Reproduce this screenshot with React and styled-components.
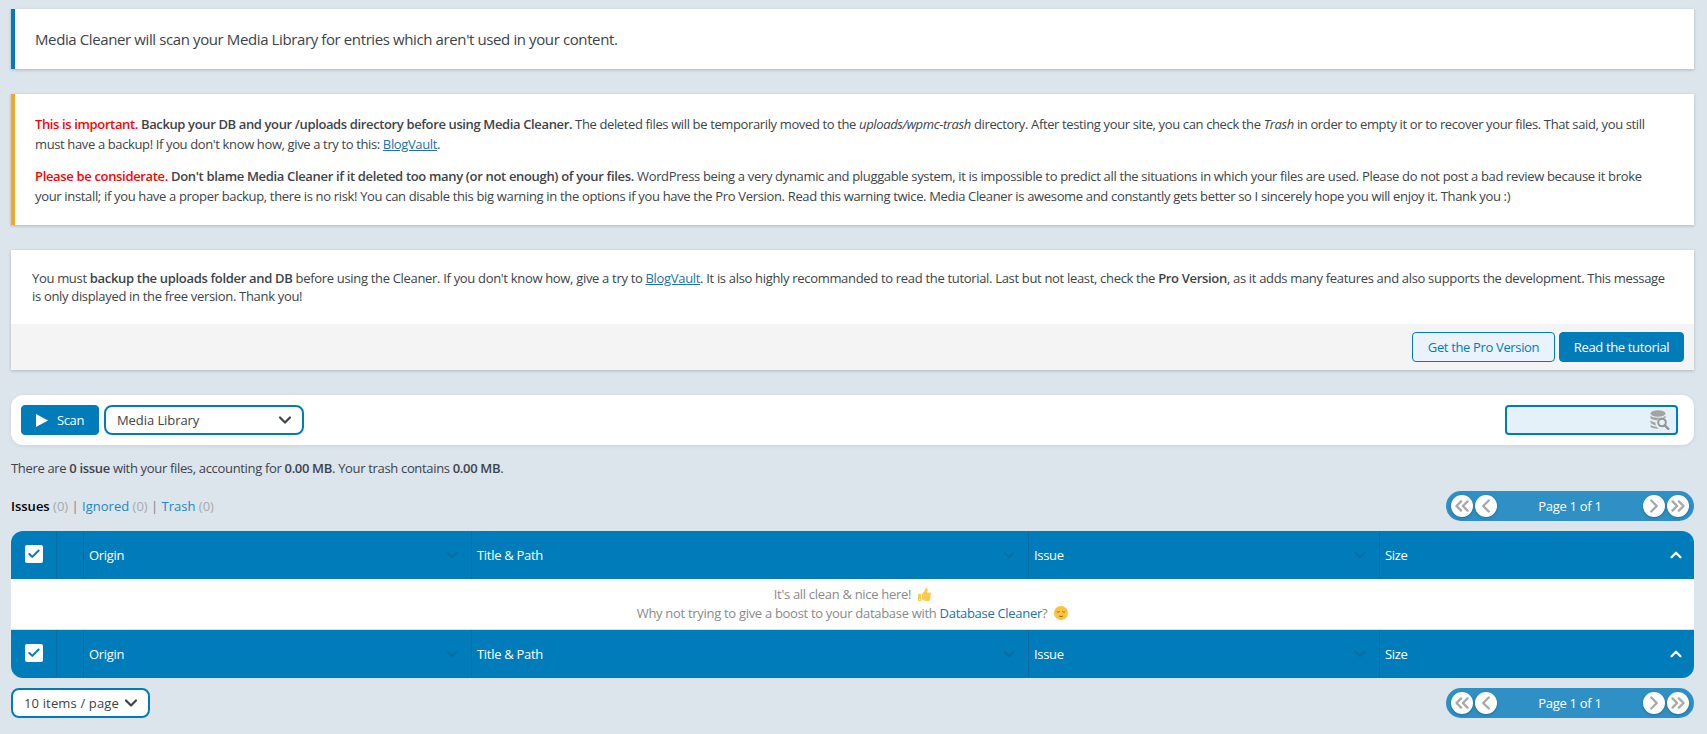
import React from 'react';
import styled, { createGlobalStyle } from 'styled-components';
import { FaThumbsUp } from 'react-icons/fa';
import {
  LuCheck,
  LuChevronDown,
  LuChevronLeft,
  LuChevronRight,
  LuChevronUp,
  LuChevronsLeft,
  LuChevronsRight,
} from 'react-icons/lu';

const GlobalStyle = createGlobalStyle`
  html, body {
    margin: 0;
    padding: 0;
    background: #dce4ec;
    overflow: hidden;
  }
  body {
    font-family: "Open Sans", "Noto Sans", sans-serif;
    font-size: 13px;
    color: #3c434a;
  }
`;

const Page = styled.div`
  box-sizing: border-box;
  width: 1707px;
  height: 734px;
  padding: 9px 13px 0 11px;
`;

const Notice = styled.div`
  background: #fff;
  border-left: 4px solid ${(p) => p.$accent};
  box-shadow: 0 1px 3px rgba(0, 0, 0, 0.2);
  box-sizing: border-box;
  height: ${(p) => p.$height};
  margin-bottom: 25px;
  padding: ${(p) => p.$padding};
`;

const IntroText = styled.div`
  font-size: 15px;
  line-height: 20px;
  letter-spacing: -0.39px;
`;

const WarnText = styled.p`
  margin: 0 0 12px;
  line-height: 20px;
  letter-spacing: ${(p) => p.$tracking};
  &:last-child {
    margin-bottom: 0;
  }
`;

const Red = styled.b`
  color: #f00;
  font-weight: 600;
`;

const Strong = styled.b`
  font-weight: 600;
`;

const TextLink = styled.a`
  color: #2271b1;
  text-decoration: underline;
`;

const PromoCard = styled.div`
  background: #fff;
  box-shadow: 0 1px 3px rgba(0, 0, 0, 0.2);
  margin-bottom: 25px;
`;

const PromoBody = styled.div`
  box-sizing: border-box;
  height: 74px;
  padding: 20px 26px 0 21px;
  font-size: 13px;
  line-height: 17.5px;
  letter-spacing: -0.32px;
`;

const PromoFooter = styled.div`
  display: flex;
  justify-content: flex-end;
  gap: 4px;
  box-sizing: border-box;
  height: 46px;
  padding: 8px 10px 0 0;
  background: #f4f4f4;
`;

const Button = styled.button`
  box-sizing: border-box;
  display: inline-flex;
  align-items: center;
  justify-content: center;
  gap: 9px;
  width: ${(p) => p.$width};
  height: 30px;
  padding: 0;
  border: 1px solid #007cba;
  border-radius: 4px;
  background: ${(p) => (p.$outline ? '#eaf3fb' : '#007cba')};
  color: ${(p) => (p.$outline ? '#007cba' : '#fff')};
  font-family: inherit;
  font-size: 13px;
  letter-spacing: -0.35px;
`;

const Toolbar = styled.div`
  display: flex;
  align-items: center;
  gap: 5px;
  box-sizing: border-box;
  height: 50px;
  padding: 0 16px 0 10px;
  background: #fff;
  border-radius: 12px;
  box-shadow: 0 1px 4px rgba(0, 0, 0, 0.08);
`;

const Select = styled.div`
  box-sizing: border-box;
  display: flex;
  align-items: center;
  justify-content: space-between;
  width: ${(p) => p.$width};
  height: 30px;
  padding: 0 7px 0 11px;
  background: #fff;
  border: 2px solid #007cba;
  border-radius: 8px;
  font-size: 13px;
  letter-spacing: ${(p) => p.$tracking};
  svg {
    font-size: 20px;
    stroke-width: 2.6;
    color: #3c434a;
  }
`;

const SearchBox = styled.div`
  box-sizing: border-box;
  display: flex;
  align-items: center;
  justify-content: flex-end;
  width: 173px;
  height: 30px;
  margin-left: auto;
  padding-right: 6px;
  background: #e5f1f8;
  border: 2px solid #007cba;
  border-radius: 4px;
`;

const Summary = styled.div`
  margin-top: 13px;
  line-height: 20px;
  letter-spacing: -0.33px;
`;

const TabsRow = styled.div`
  display: flex;
  align-items: center;
  justify-content: space-between;
  height: 30px;
  margin: 13px 0 10px;
`;

const Tabs = styled.div`
  color: #a7aaad;
`;

const TabActive = styled.b`
  color: #000;
  font-weight: 600;
`;

const TabLink = styled.a`
  color: #2288c4;
`;

const TabSep = styled.span`
  color: #7d8287;
`;

const Pager = styled.div`
  box-sizing: border-box;
  display: flex;
  align-items: center;
  gap: 2px;
  width: 248px;
  height: 30px;
  padding: 0 5px;
  background: #2f90c5;
  border-radius: 15px;
`;

const PagerButton = styled.span`
  display: flex;
  align-items: center;
  justify-content: center;
  width: 22px;
  height: 22px;
  border-radius: 50%;
  background: #fff;
  color: #a9a9a9;
  font-size: 22px;
  box-shadow: 0 1px 3px rgba(0, 0, 0, 0.25);
  svg {
    flex-shrink: 0;
    stroke-width: 2.6;
  }
`;

const PagerLabel = styled.span`
  flex: 1;
  text-align: center;
  color: #fff;
  font-size: 13px;
  letter-spacing: -0.3px;
`;

const HeadRow = styled.div`
  display: grid;
  grid-template-columns: 45px 27px 388px 557px 351px 1fr;
  height: 48px;
  background: #007cba;
  border-radius: ${(p) => (p.$bottom ? '0 0 12px 12px' : '12px 12px 0 0')};
  color: #fff;
`;

const HeadCell = styled.div`
  box-sizing: border-box;
  display: flex;
  align-items: center;
  justify-content: space-between;
  padding: 0 10px 0 5px;
  font-size: 13px;
  letter-spacing: -0.3px;
  & + & {
    border-left: 1px solid #0a6ea3;
  }
  &:first-child {
    padding: 0 0 2px 14px;
  }
`;

const SortIcon = styled.span`
  display: flex;
  font-size: 18px;
  color: ${(p) => (p.$active ? '#fff' : '#0a6ea3')};
  margin-right: ${(p) => (p.$active ? '-1px' : '0')};
  svg {
    stroke-width: ${(p) => (p.$active ? 3 : 2.4)};
  }
`;

const CheckBox = styled.span`
  display: flex;
  align-items: center;
  justify-content: center;
  width: 18px;
  height: 18px;
  border-radius: 2px;
  background: #fff;
  color: #007cba;
  font-size: 14px;
  svg {
    stroke-width: 3.4;
  }
`;

const EmptyRow = styled.div`
  box-sizing: border-box;
  height: 51px;
  padding-top: 6px;
  background: #fff;
  border-bottom: 1px solid #dcdcdc;
  color: #8a8a8a;
  text-align: center;
  font-size: 13px;
  line-height: 19px;
  letter-spacing: -0.3px;
`;

const EmojiSlot = styled.span`
  display: inline-flex;
  vertical-align: -2px;
  margin-left: 4px;
  color: #fbc94c;
  font-size: 13px;
`;

const DbLink = styled.a`
  color: #2271b1;
  text-decoration: none;
`;

const BottomRow = styled.div`
  display: flex;
  align-items: center;
  justify-content: space-between;
  margin-top: 10px;
`;

const DatabaseSearchIcon = () => (
  <svg width="20" height="20" viewBox="0 0 20 20" fill="#a3a3a3">
    <ellipse cx="8" cy="3.500" rx="7.500" ry="3.200" />
    <path d="M.5 5.500C2 8.500 14 8.500 15.500 5.500v2.700a6.500 6.500 0 0 0-8.500 2C3.500 10 1.500 9.300.5 8.200z" />
    <path d="M.5 10.200C1.500 11.500 3.600 12.200 5.500 12.400c-.1 1 .1 2 .5 2.900C3.500 15 1.200 14 .5 12.800z" />
    <path d="M.5 14.800c1 1 3 1.700 6.300 2 .700 1 1.200 1.400 2 1.900-4.500.200-7.600-1-8.300-2z" />
    <circle cx="12" cy="12.500" r="3.800" fill="none" stroke="#969696" strokeWidth="2" />
    <path d="M14.800 15.300l3.500 3.500" stroke="#969696" strokeWidth="2.600" strokeLinecap="round" />
  </svg>
);

const PlayIcon = () => (
  <svg width="12" height="13" viewBox="0 0 12 13" fill="#fff">
    <path d="M0 0l12 6.500L0 13z" />
  </svg>
);

const RelievedFace = () => (
  <svg width="14" height="14" viewBox="0 0 14 14">
    <circle cx="7" cy="7" r="7" fill="#fbc23f" />
    <path d="M2.800 5.500c.800.700 2 .700 2.800 0M8.400 5.500c.800.700 2 .700 2.800 0" stroke="#a0621a" fill="none" strokeWidth="1" />
    <path d="M5 10c1.300.700 2.700.700 4 0" stroke="#a0621a" fill="none" strokeWidth="1" />
  </svg>
);

const TablePager = () => (
  <Pager>
    <PagerButton><LuChevronsLeft /></PagerButton>
    <PagerButton><LuChevronLeft /></PagerButton>
    <PagerLabel>Page 1 of 1</PagerLabel>
    <PagerButton><LuChevronRight /></PagerButton>
    <PagerButton><LuChevronsRight /></PagerButton>
  </Pager>
);

const columns = ['Origin', 'Title & Path', 'Issue'];

const TableHead = ({ bottom }) => (
  <HeadRow $bottom={bottom}>
    <HeadCell><CheckBox><LuCheck /></CheckBox></HeadCell>
    <HeadCell />
    {columns.map((label) => (
      <HeadCell key={label}>
        {label}
        <SortIcon><LuChevronDown /></SortIcon>
      </HeadCell>
    ))}
    <HeadCell>
      Size
      <SortIcon $active><LuChevronUp /></SortIcon>
    </HeadCell>
  </HeadRow>
);

const App = () => (
  <Page>
    <GlobalStyle />
    <Notice $accent="#007cba" $height="60px" $padding="20px 0 0 20px">
      <IntroText>
        Media Cleaner will scan your Media Library for entries which aren&apos;t used in your content.
      </IntroText>
    </Notice>

    <Notice $accent="#f5a623" $height="131px" $padding="20px 24px 0 20px">
      <WarnText $tracking="-0.37px">
        <Red>This is important.</Red> <Strong>Backup your DB and your /uploads directory before using Media Cleaner.</Strong>{' '}
        The deleted files will be temporarily moved to the <i>uploads/wpmc-trash</i> directory. After testing your site, you can check the <i>Trash</i> in order to empty it or to recover your files. That said, you still must have a backup! If you don&apos;t know how, give a try to this: <TextLink href="#">BlogVault</TextLink>.
      </WarnText>
      <WarnText $tracking="-0.335px">
        <Red>Please be considerate.</Red> <Strong>Don&apos;t blame Media Cleaner if it deleted too many (or not enough) of your files.</Strong>{' '}
        WordPress being a very dynamic and pluggable system, it is impossible to predict all the situations in which your files are used. Please do not post a bad review because it broke your install; if you have a proper backup, there is no risk! You can disable this big warning in the options if you have the Pro Version. Read this warning twice. Media Cleaner is awesome and constantly gets better so I sincerely hope you will enjoy it. Thank you :)
      </WarnText>
    </Notice>

    <PromoCard>
      <PromoBody>
        You must <Strong>backup the uploads folder and DB</Strong> before using the Cleaner. If you don&apos;t know how, give a try to <TextLink href="#">BlogVault</TextLink>. It is also highly recommanded to read the tutorial. Last but not least, check the <Strong>Pro Version</Strong>, as it adds many features and also supports the development. This message is only displayed in the free version. Thank you!
      </PromoBody>
      <PromoFooter>
        <Button $outline $width="143px">Get the Pro Version</Button>
        <Button $width="125px">Read the tutorial</Button>
      </PromoFooter>
    </PromoCard>

    <Toolbar>
      <Button $width="78px"><PlayIcon />Scan</Button>
      <Select $width="200px" $tracking="-0.07px">
        Media Library
        <LuChevronDown />
      </Select>
      <SearchBox><DatabaseSearchIcon /></SearchBox>
    </Toolbar>

    <Summary>
      There are <Strong>0 issue</Strong> with your files, accounting for <Strong>0.00 MB</Strong>. Your trash contains <Strong>0.00 MB</Strong>.
    </Summary>

    <TabsRow>
      <Tabs>
        <TabActive>Issues</TabActive> (0) <TabSep>|</TabSep> <TabLink>Ignored</TabLink> (0) <TabSep>|</TabSep> <TabLink>Trash</TabLink> (0)
      </Tabs>
      <TablePager />
    </TabsRow>

    <TableHead />
    <EmptyRow>
      It&apos;s all clean &amp; nice here! <EmojiSlot><FaThumbsUp /></EmojiSlot>
      <br />
      Why not trying to give a boost to your database with <DbLink href="#">Database Cleaner</DbLink>? <EmojiSlot><RelievedFace /></EmojiSlot>
    </EmptyRow>
    <TableHead bottom />

    <BottomRow>
      <Select $width="139px" $tracking="0.15px">
        10 items / page
        <LuChevronDown />
      </Select>
      <TablePager />
    </BottomRow>
  </Page>
);

export default App;
